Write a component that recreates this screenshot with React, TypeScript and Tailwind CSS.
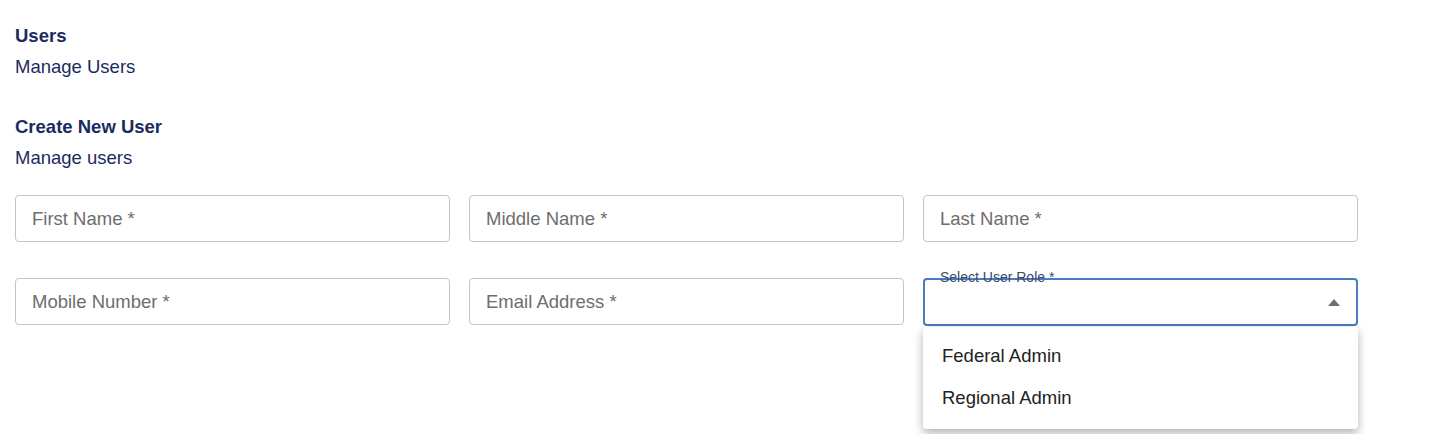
import React from 'react'

const font = { fontFamily: '"Liberation Sans", Arial, sans-serif' }

function TextField({ label }: { label: string }) {
  return (
    <div className="h-[47px] w-[435px] rounded-[4px] border border-[#c4c4c4] bg-white px-4 flex items-center">
      <span className="text-[18.5px] text-[#6e6e6e]">{label}</span>
    </div>
  )
}

function RoleSelect() {
  const roles = ['Federal Admin', 'Regional Admin']
  return (
    <div className="relative w-[435px]">
      <div className="relative h-[48px] rounded-[4px] border-2 border-[#4a7cc5] bg-white">
        <svg
          className="absolute right-[16px] top-[19px]"
          width="12"
          height="7"
          viewBox="0 0 12 7"
        >
          <path d="M0 7 L6 0 L12 7 Z" fill="#707070" />
        </svg>
      </div>
      <span className="absolute left-[17px] top-[-9px] text-[14px] leading-[16px] text-[#3c4a6a]">
        Select User Role *
      </span>
      <div className="absolute left-0 top-[49px] w-[435px] rounded-[4px] bg-white pt-[8px] pb-[10px] shadow-[0_5px_8px_rgba(0,0,0,0.2),0_2px_12px_rgba(0,0,0,0.12)] z-10">
        {roles.map((role) => (
          <div key={role} className="h-[42px] flex items-center px-[19px] text-[18.5px] text-[#222]">
            {role}
          </div>
        ))}
      </div>
    </div>
  )
}

export default function App() {
  return (
    <div className="min-h-[434px] bg-white px-[15px] pt-[24px]" style={font}>
      <div className="text-[#1c2b5e]">
        <h2 className="text-[18.5px] font-bold leading-[24px]">Users</h2>
        <p className="mt-[7px] text-[18.5px] leading-[24px]">Manage Users</p>
      </div>

      <div className="mt-[36px] text-[#1c2b5e]">
        <h3 className="text-[18.5px] font-bold leading-[24px]">Create New User</h3>
        <p className="mt-[7px] text-[18.5px] leading-[24px]">Manage users</p>
      </div>

      <div className="mt-[25px] flex flex-col gap-[36px]">
        <div className="flex gap-[19px]">
          <TextField label="First Name *" />
          <TextField label="Middle Name *" />
          <TextField label="Last Name *" />
        </div>
        <div className="flex gap-[19px]">
          <TextField label="Mobile Number *" />
          <TextField label="Email Address *" />
          <RoleSelect />
        </div>
      </div>
    </div>
  )
}
